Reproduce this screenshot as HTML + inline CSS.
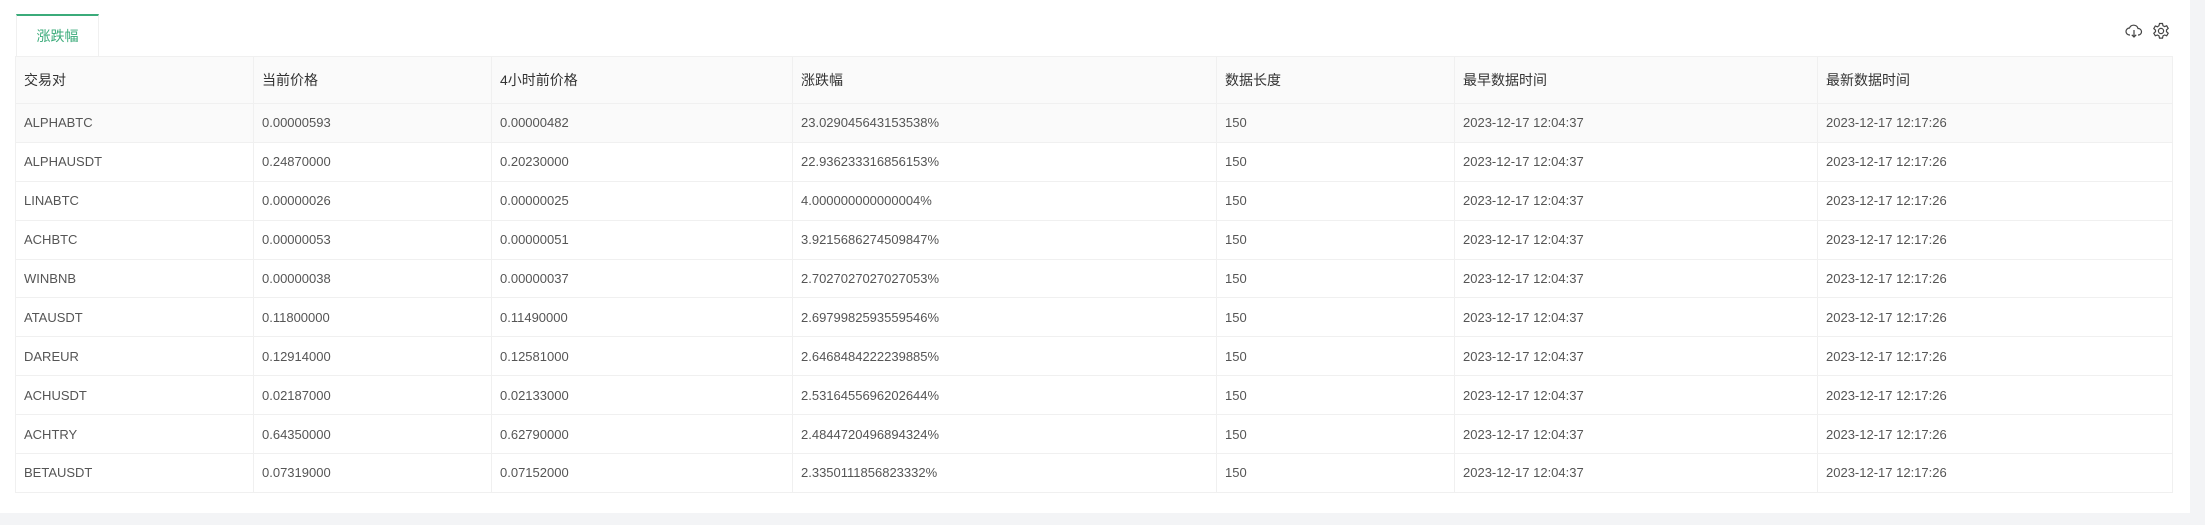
<!DOCTYPE html>
<html><head><meta charset="utf-8"><style>
*{margin:0;padding:0;box-sizing:border-box}
body{width:2205px;height:525px;background:#fff;position:relative;overflow:hidden;font-family:"Liberation Sans","Noto Sans CJK SC",sans-serif;color:rgba(0,0,0,.85)}
.gr{position:absolute;left:2190px;top:0;width:15px;height:525px;background:#f3f4f6}
.gb{position:absolute;left:0;top:513px;width:2205px;height:12px;background:#f3f4f6}
.tab{position:absolute;left:16px;top:14px;width:83px;height:43px;border:1px solid #f0f0f0;border-bottom:none;border-top:2px solid #3bab7a;color:#3bab7a;font-size:14px;text-align:center;line-height:40px;background:#fff}
table{position:absolute;left:15px;top:56px;width:2158px;border-collapse:collapse;font-size:13px}
td,th{border:1px solid #f0f0f0;text-align:left;padding:0 0 0 8px;height:38.9px;font-weight:normal;color:#555}
th{background:#fafafa;height:47px;font-weight:normal;font-size:14px;color:#333}
tr.h td{background:#fafafa}
.ic{position:absolute;top:22px}
</style></head><body>
<div class="gr"></div><div class="gb"></div>
<div class="tab">涨跌幅</div>
<svg class="ic" style="left:2125px" width="18" height="18" viewBox="0 0 18 18" fill="none" stroke="#444" stroke-width="1.2"><path d="M5 13H4.5A3.5 3.5 0 0 1 4.5 6 4.5 4.5 0 0 1 13 6.5 3.2 3.2 0 0 1 13.5 13H13"/><path d="M9 8v7M6.8 12.8 9 15l2.2-2.2"/></svg>
<svg class="ic" style="left:2152px" width="18" height="18" viewBox="0 0 18 18" fill="none" stroke="#444" stroke-width="1.2"><path d="M7.5 1.5h3l.5 2.2 1.6.9 2.1-.8 1.5 2.6-1.7 1.5v1.8l1.7 1.5-1.5 2.6-2.1-.8-1.6.9-.5 2.2h-3l-.5-2.2-1.6-.9-2.1.8-1.5-2.6 1.7-1.5V8.1L1.8 6.6l1.5-2.6 2.1.8L7 3.7z"/><circle cx="9" cy="9" r="2.6"/></svg>
<table>
<colgroup><col style="width:238px"><col style="width:238px"><col style="width:301px"><col style="width:424px"><col style="width:238px"><col style="width:363px"><col></colgroup>
<tr><th>交易对</th><th>当前价格</th><th>4小时前价格</th><th>涨跌幅</th><th>数据长度</th><th>最早数据时间</th><th>最新数据时间</th></tr>
<tr class="h"><td>ALPHABTC</td><td>0.00000593</td><td>0.00000482</td><td>23.029045643153538%</td><td>150</td><td>2023-12-17 12:04:37</td><td>2023-12-17 12:17:26</td></tr>
<tr><td>ALPHAUSDT</td><td>0.24870000</td><td>0.20230000</td><td>22.936233316856153%</td><td>150</td><td>2023-12-17 12:04:37</td><td>2023-12-17 12:17:26</td></tr>
<tr><td>LINABTC</td><td>0.00000026</td><td>0.00000025</td><td>4.000000000000004%</td><td>150</td><td>2023-12-17 12:04:37</td><td>2023-12-17 12:17:26</td></tr>
<tr><td>ACHBTC</td><td>0.00000053</td><td>0.00000051</td><td>3.9215686274509847%</td><td>150</td><td>2023-12-17 12:04:37</td><td>2023-12-17 12:17:26</td></tr>
<tr><td>WINBNB</td><td>0.00000038</td><td>0.00000037</td><td>2.7027027027027053%</td><td>150</td><td>2023-12-17 12:04:37</td><td>2023-12-17 12:17:26</td></tr>
<tr><td>ATAUSDT</td><td>0.11800000</td><td>0.11490000</td><td>2.6979982593559546%</td><td>150</td><td>2023-12-17 12:04:37</td><td>2023-12-17 12:17:26</td></tr>
<tr><td>DAREUR</td><td>0.12914000</td><td>0.12581000</td><td>2.6468484222239885%</td><td>150</td><td>2023-12-17 12:04:37</td><td>2023-12-17 12:17:26</td></tr>
<tr><td>ACHUSDT</td><td>0.02187000</td><td>0.02133000</td><td>2.5316455696202644%</td><td>150</td><td>2023-12-17 12:04:37</td><td>2023-12-17 12:17:26</td></tr>
<tr><td>ACHTRY</td><td>0.64350000</td><td>0.62790000</td><td>2.4844720496894324%</td><td>150</td><td>2023-12-17 12:04:37</td><td>2023-12-17 12:17:26</td></tr>
<tr><td>BETAUSDT</td><td>0.07319000</td><td>0.07152000</td><td>2.3350111856823332%</td><td>150</td><td>2023-12-17 12:04:37</td><td>2023-12-17 12:17:26</td></tr>
</table>
</body></html>
